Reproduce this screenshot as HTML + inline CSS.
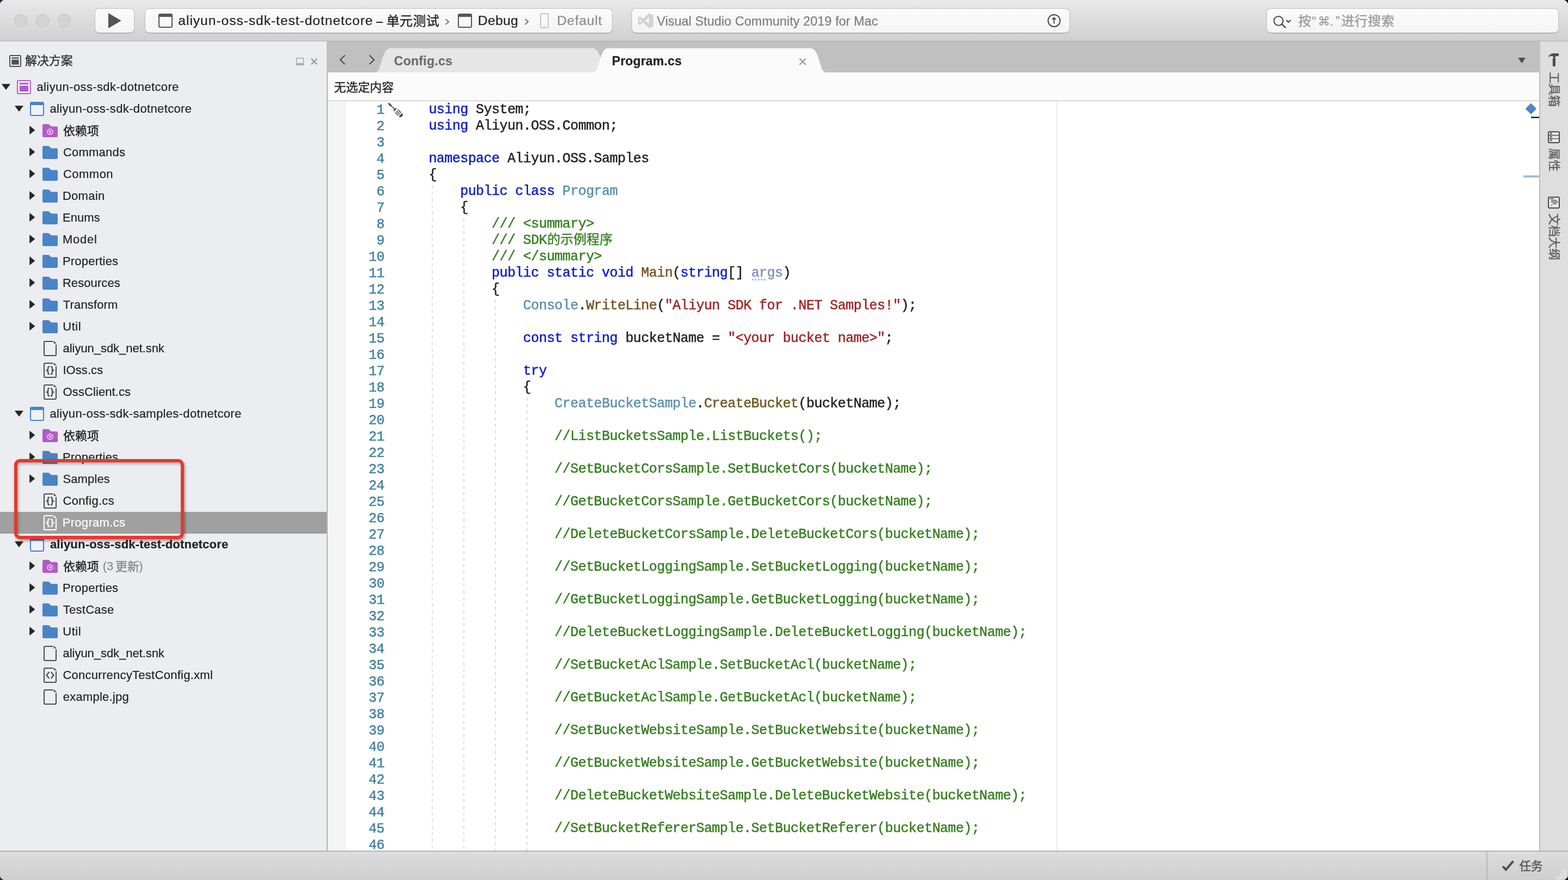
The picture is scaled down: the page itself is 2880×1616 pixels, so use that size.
<!DOCTYPE html><html><head><meta charset="utf-8"><title>VS</title><style>
*{box-sizing:border-box}
html,body{margin:0;padding:0}
body{width:2880px;height:1616px;overflow:hidden;position:relative;background:linear-gradient(to right,#15264c 0,#15264c 50%,#000 50%);font-family:"Liberation Sans",sans-serif}
#win{will-change:transform;position:absolute;left:0;top:0;width:2880px;height:1616px;border-radius:9px;overflow:hidden;background:#fff}
#win span{position:absolute;white-space:pre;-webkit-text-stroke:0.22px currentColor}
.ab{position:absolute;overflow:visible}
#win span.cjt{font-family:"Liberation Sans","Noto Sans CJK SC",sans-serif;-webkit-text-stroke:0.4px currentColor}
.box{position:absolute;top:15px;height:46px;border-radius:8.5px;background:linear-gradient(#fbfbfb,#f4f4f4);border:1px solid #c4c4c4;border-bottom-color:#a6a6a6;border-top-color:#c0c0c0;box-shadow:0 1px 1px rgba(0,0,0,0.10),0 0 0 0.5px rgba(0,0,0,0.05)}
#tb{position:absolute;left:0;top:0;width:2880px;height:76px;background:linear-gradient(#e9e9e9,#d0d0d0);border-bottom:1px solid #adadad}
#side{position:absolute;left:0;top:76px;width:600px;height:1486px;background:#ecedf1}
#sel{position:absolute;left:0;top:940px;width:600px;height:40px;background:#a0a0a0}
#vsep{position:absolute;left:600px;top:133px;width:2px;height:1429px;background:#b4b4b4}
#tabs{position:absolute;left:600px;top:76px;width:2227px;height:57px;background:#c0c0c0}
#crumb{position:absolute;left:602px;top:133px;width:2225px;height:53px;background:#fbfbfb;border-bottom:2px solid #dadada}
#ed{position:absolute;left:602px;top:186px;width:2225px;height:1376px;background:#fff;overflow:hidden}
#gut{position:absolute;left:0;top:0;width:34px;height:1376px;background:#f5f5f5}
#rs{position:absolute;left:2827px;top:76px;width:53px;height:1486px;background:#dedede;border-left:2px solid #bebebe}
#sb{position:absolute;left:0;top:1562px;width:2880px;height:54px;background:linear-gradient(#dddddd,#cecece);border-top:2px solid #b4b4b4}
.cl{color:#222}
.ln,.cl{position:absolute;font-family:"Liberation Mono",monospace;white-space:pre;-webkit-text-stroke:0.5px currentColor}
.ln{color:#4180a0;text-align:right;width:80px}
.k{color:#0a1bd2}.t{color:#5b8fb0}.m{color:#74531f}.s{color:#9e2424}.c{color:#35801f}.p{color:#8090bd}
i{font-style:normal}
.guide{position:absolute;width:2px;background:repeating-linear-gradient(to bottom,transparent 0,transparent 4px,#dedede 4px,#dedede 10px,transparent 10px,transparent 12px)}
</style></head><body><div id="win"><div id="tb"></div><div class="ab" style="left:26px;top:26px;width:24px;height:24px;border-radius:50%;background:#d4d4d4;border:1px solid #bdbdbd"></div><div class="ab" style="left:66px;top:26px;width:24px;height:24px;border-radius:50%;background:#d4d4d4;border:1px solid #bdbdbd"></div><div class="ab" style="left:106px;top:26px;width:24px;height:24px;border-radius:50%;background:#d4d4d4;border:1px solid #bdbdbd"></div><div class="box" style="left:173.5px;width:73px"></div><svg class="ab" style="left:199px;top:24px" width="24" height="28" viewBox="0 0 24 28"><path d="M0 0 L0 28 L23.7 14 Z" fill="#555"/></svg><div class="box" style="left:265.5px;width:859px"></div><svg class="ab" style="left:291px;top:25px" width="26" height="26" viewBox="0 0 26 26"><rect x="1" y="1" width="24" height="24" rx="2" fill="none" stroke="#555" stroke-width="2"/><rect x="1" y="1" width="24" height="5" fill="#555"/></svg><span class="T1" style="left:327.35px;top:22.27px;font-size:24.6px;line-height:32px;color:#222;letter-spacing:0.958px;">aliyun-oss-sdk-test-dotnetcore</span><div class="ab" style="left:691.2px;top:39.6px;width:11.7px;height:2.2px;background:#222"></div><span class="cjt" style="left:709.8px;top:25.2px;font-size:24px;line-height:28.8px;color:#222;letter-spacing:0.3px;">单元测试</span><svg class="ab" style="left:816.5px;top:34px" width="9" height="12" viewBox="0 0 9 12"><path d="M1.5 1 L7 6 L1.5 11" fill="none" stroke="#7a7a7a" stroke-width="2.2"/></svg><svg class="ab" style="left:841px;top:25px" width="26" height="26" viewBox="0 0 26 26"><rect x="1" y="1" width="24" height="24" rx="2" fill="none" stroke="#555" stroke-width="2"/><rect x="1" y="1" width="24" height="5" fill="#555"/></svg><span class="T2" style="left:877.81px;top:22.27px;font-size:24.6px;line-height:32px;color:#222;letter-spacing:0.373px;">Debug</span><svg class="ab" style="left:962.5px;top:34px" width="9" height="12" viewBox="0 0 9 12"><path d="M1.5 1 L7 6 L1.5 11" fill="none" stroke="#7a7a7a" stroke-width="2.2"/></svg><svg class="ab" style="left:992px;top:24px" width="16" height="28" viewBox="0 0 16 28"><rect x="1" y="1" width="14" height="26" rx="2" fill="none" stroke="#c6c6c6" stroke-width="2"/><circle cx="8" cy="23.4" r="1.2" fill="#c6c6c6"/></svg><span class="T3" style="left:1022.97px;top:22.27px;font-size:24.6px;line-height:32px;color:#8c8c8c;letter-spacing:0.766px;">Default</span><div class="box" style="left:1159.5px;width:805px"></div><svg class="ab" style="left:1172px;top:24px" width="28" height="28" viewBox="0 0 28 28"><path fill-rule="evenodd" fill="#d3d3d3" d="M20 0 L28 3.4 V24.6 L20 28 L9.2 17.2 L3 22 L0 20.4 V7.6 L3 6 L9.2 10.8 Z M20 8.6 L13 14 L20 19.4 Z M3 10.4 V17.6 L6.8 14 Z"/></svg><span class="T4" style="left:1206.43px;top:23.92px;font-size:23.3px;line-height:30px;color:#7c7c7c;letter-spacing:0.110px;">Visual Studio Community 2019 for Mac</span><svg class="ab" style="left:1924px;top:26px" width="25" height="25" viewBox="0 0 25 25"><circle cx="12.1" cy="11.9" r="11" fill="none" stroke="#444" stroke-width="2"/><path d="M12 5.2 L16.6 9.8 H12.9 V17.8 H11.1 V9.8 H7.4 Z" fill="#444"/></svg><div class="box" style="left:2325.5px;width:537px"></div><svg class="ab" style="left:2338px;top:28px" width="34" height="25" viewBox="0 0 34 25"><circle cx="10.3" cy="10.3" r="8.4" fill="none" stroke="#444" stroke-width="2"/><path d="M16.2 16.4 L23.6 23.2" stroke="#444" stroke-width="2.4"/><path d="M24.6 9 L28.6 12.6 L32.6 9" fill="none" stroke="#444" stroke-width="2"/></svg><span class="cjt" style="left:2384.5px;top:25.0px;font-size:24px;line-height:28.8px;color:#9b9b9b;">按</span><span class="cjt" style="left:2463.5px;top:25.0px;font-size:24px;line-height:28.8px;color:#9b9b9b;letter-spacing:0.5px;">进行搜索</span><span style="left:2409.50px;top:22.88px;font-size:24px;line-height:31px;color:#9b9b9b;">“</span><span style="left:2420.6px;top:26.3px;font-size:22.5px;line-height:27px;color:#9b9b9b;font-family:'Liberation Sans','DejaVu Sans',sans-serif;">⌘</span><span style="left:2442.50px;top:22.88px;font-size:24px;line-height:31px;color:#9b9b9b;">.</span><span style="left:2453.00px;top:22.88px;font-size:24px;line-height:31px;color:#9b9b9b;">”</span><div id="side"></div><div id="sel"></div><div id="vsep"></div><svg class="ab" style="left:17px;top:101px" width="22" height="22" viewBox="0 0 22 22"><rect x="1" y="1" width="20" height="20" rx="1.5" fill="none" stroke="#505050" stroke-width="2"/><rect x="4.4" y="4.4" width="13.2" height="2.4" fill="#505050"/><rect x="4.4" y="8.6" width="13.2" height="9" fill="#505050"/></svg><span class="cjt" style="left:46px;top:99.4px;font-size:22px;line-height:26.4px;color:#333;letter-spacing:-0.1px;">解决方案</span><svg class="ab" style="left:544px;top:106px" width="14" height="14" viewBox="0 0 14 14"><rect x="0.75" y="0.75" width="12.5" height="12.5" fill="none" stroke="#a9a9a9" stroke-width="1.5"/><rect x="0.75" y="10" width="12.5" height="3.25" fill="#a9a9a9"/></svg><svg class="ab" style="left:571px;top:107px" width="12" height="12" viewBox="0 0 12 12"><path d="M0.8 0.8 L11.2 11.2 M11.2 0.8 L0.8 11.2" stroke="#959595" stroke-width="2.3"/></svg><svg class="ab" style="left:3px;top:154px" width="16" height="11" viewBox="0 0 16 11"><path d="M0.6 0.6 L15.4 0.6 L8 10.6 Z" fill="#262626" stroke="#262626" stroke-width="0.8" stroke-linejoin="round"/></svg><svg class="ab" style="left:31px;top:147px" width="26" height="26" viewBox="0 0 26 26"><rect x="1" y="1" width="24" height="24" rx="2" fill="#f6e8f9" stroke="#b660c4" stroke-width="2"/><rect x="5" y="5" width="16" height="3" fill="#b45ac8"/><rect x="5" y="10.4" width="16" height="10.6" fill="#b45ac8"/></svg><span class="R0" style="left:67.50px;top:144.57px;font-size:22px;line-height:29px;color:#222;letter-spacing:0.373px;">aliyun-oss-sdk-dotnetcore</span><svg class="ab" style="left:27px;top:194px" width="16" height="11" viewBox="0 0 16 11"><path d="M0.6 0.6 L15.4 0.6 L8 10.6 Z" fill="#262626" stroke="#262626" stroke-width="0.8" stroke-linejoin="round"/></svg><svg class="ab" style="left:55px;top:187px" width="26" height="26" viewBox="0 0 26 26"><rect x="1" y="1" width="24" height="24" rx="2" fill="#eef1f8" stroke="#4a82c3" stroke-width="2"/><rect x="1" y="1" width="24" height="5" fill="#4a82c3"/></svg><span class="R1" style="left:91.50px;top:184.57px;font-size:22px;line-height:29px;color:#222;letter-spacing:0.359px;">aliyun-oss-sdk-dotnetcore</span><svg class="ab" style="left:54px;top:231.2px" width="11" height="16" viewBox="0 0 11 16"><path d="M0.6 0.6 L0.6 15.4 L9.9 8 Z" fill="#262626" stroke="#262626" stroke-width="0.8" stroke-linejoin="round"/></svg><svg class="ab" style="left:78px;top:228px" width="28" height="24" viewBox="0 0 28 24"><path d="M2 0 H10.6 Q11.6 0 12.4 0.8 L15.2 3.6 Q16 4.3 17 4.3 H26 Q28 4.3 28 6.3 V22 Q28 24 26 24 H2 Q0 24 0 22 V2 Q0 0 2 0 Z" fill="#b05cc4"/><path d="M14 8.6 L18.7 11.3 V16.7 L14 19.4 L9.3 16.7 V11.3 Z" fill="none" stroke="#f3dff7" stroke-width="1.3" stroke-linejoin="round"/><path d="M11.3 12.4 L14 14 L16.7 12.4 M14 14 V17.2" fill="none" stroke="#f3dff7" stroke-width="1.6"/></svg><span class="cjt" style="left:116.0px;top:228.2px;font-size:22px;line-height:26.4px;color:#222;letter-spacing:-0.1px;">依赖项</span><svg class="ab" style="left:54px;top:271.2px" width="11" height="16" viewBox="0 0 11 16"><path d="M0.6 0.6 L0.6 15.4 L9.9 8 Z" fill="#262626" stroke="#262626" stroke-width="0.8" stroke-linejoin="round"/></svg><svg class="ab" style="left:78px;top:268px" width="28" height="24" viewBox="0 0 28 24"><path d="M2 0 H10.6 Q11.6 0 12.4 0.8 L15.2 3.6 Q16 4.3 17 4.3 H26 Q28 4.3 28 6.3 V22 Q28 24 26 24 H2 Q0 24 0 22 V2 Q0 0 2 0 Z" fill="#4a84c6"/></svg><span class="R3" style="left:115.89px;top:264.57px;font-size:22px;line-height:29px;color:#222;letter-spacing:0.237px;">Commands</span><svg class="ab" style="left:54px;top:311.2px" width="11" height="16" viewBox="0 0 11 16"><path d="M0.6 0.6 L0.6 15.4 L9.9 8 Z" fill="#262626" stroke="#262626" stroke-width="0.8" stroke-linejoin="round"/></svg><svg class="ab" style="left:78px;top:308px" width="28" height="24" viewBox="0 0 28 24"><path d="M2 0 H10.6 Q11.6 0 12.4 0.8 L15.2 3.6 Q16 4.3 17 4.3 H26 Q28 4.3 28 6.3 V22 Q28 24 26 24 H2 Q0 24 0 22 V2 Q0 0 2 0 Z" fill="#4a84c6"/></svg><span class="R4" style="left:115.89px;top:304.57px;font-size:22px;line-height:29px;color:#222;letter-spacing:0.496px;">Common</span><svg class="ab" style="left:54px;top:351.2px" width="11" height="16" viewBox="0 0 11 16"><path d="M0.6 0.6 L0.6 15.4 L9.9 8 Z" fill="#262626" stroke="#262626" stroke-width="0.8" stroke-linejoin="round"/></svg><svg class="ab" style="left:78px;top:348px" width="28" height="24" viewBox="0 0 28 24"><path d="M2 0 H10.6 Q11.6 0 12.4 0.8 L15.2 3.6 Q16 4.3 17 4.3 H26 Q28 4.3 28 6.3 V22 Q28 24 26 24 H2 Q0 24 0 22 V2 Q0 0 2 0 Z" fill="#4a84c6"/></svg><span class="R5" style="left:114.92px;top:344.57px;font-size:22px;line-height:29px;color:#222;letter-spacing:0.282px;">Domain</span><svg class="ab" style="left:54px;top:391.2px" width="11" height="16" viewBox="0 0 11 16"><path d="M0.6 0.6 L0.6 15.4 L9.9 8 Z" fill="#262626" stroke="#262626" stroke-width="0.8" stroke-linejoin="round"/></svg><svg class="ab" style="left:78px;top:388px" width="28" height="24" viewBox="0 0 28 24"><path d="M2 0 H10.6 Q11.6 0 12.4 0.8 L15.2 3.6 Q16 4.3 17 4.3 H26 Q28 4.3 28 6.3 V22 Q28 24 26 24 H2 Q0 24 0 22 V2 Q0 0 2 0 Z" fill="#4a84c6"/></svg><span class="R6" style="left:114.92px;top:384.57px;font-size:22px;line-height:29px;color:#222;letter-spacing:0.086px;">Enums</span><svg class="ab" style="left:54px;top:431.2px" width="11" height="16" viewBox="0 0 11 16"><path d="M0.6 0.6 L0.6 15.4 L9.9 8 Z" fill="#262626" stroke="#262626" stroke-width="0.8" stroke-linejoin="round"/></svg><svg class="ab" style="left:78px;top:428px" width="28" height="24" viewBox="0 0 28 24"><path d="M2 0 H10.6 Q11.6 0 12.4 0.8 L15.2 3.6 Q16 4.3 17 4.3 H26 Q28 4.3 28 6.3 V22 Q28 24 26 24 H2 Q0 24 0 22 V2 Q0 0 2 0 Z" fill="#4a84c6"/></svg><span class="R7" style="left:114.92px;top:424.57px;font-size:22px;line-height:29px;color:#222;letter-spacing:0.769px;">Model</span><svg class="ab" style="left:54px;top:471.2px" width="11" height="16" viewBox="0 0 11 16"><path d="M0.6 0.6 L0.6 15.4 L9.9 8 Z" fill="#262626" stroke="#262626" stroke-width="0.8" stroke-linejoin="round"/></svg><svg class="ab" style="left:78px;top:468px" width="28" height="24" viewBox="0 0 28 24"><path d="M2 0 H10.6 Q11.6 0 12.4 0.8 L15.2 3.6 Q16 4.3 17 4.3 H26 Q28 4.3 28 6.3 V22 Q28 24 26 24 H2 Q0 24 0 22 V2 Q0 0 2 0 Z" fill="#4a84c6"/></svg><span class="R8" style="left:114.92px;top:464.57px;font-size:22px;line-height:29px;color:#222;letter-spacing:0.212px;">Properties</span><svg class="ab" style="left:54px;top:511.2px" width="11" height="16" viewBox="0 0 11 16"><path d="M0.6 0.6 L0.6 15.4 L9.9 8 Z" fill="#262626" stroke="#262626" stroke-width="0.8" stroke-linejoin="round"/></svg><svg class="ab" style="left:78px;top:508px" width="28" height="24" viewBox="0 0 28 24"><path d="M2 0 H10.6 Q11.6 0 12.4 0.8 L15.2 3.6 Q16 4.3 17 4.3 H26 Q28 4.3 28 6.3 V22 Q28 24 26 24 H2 Q0 24 0 22 V2 Q0 0 2 0 Z" fill="#4a84c6"/></svg><span class="R9" style="left:114.92px;top:504.57px;font-size:22px;line-height:29px;color:#222;letter-spacing:0.081px;">Resources</span><svg class="ab" style="left:54px;top:551.2px" width="11" height="16" viewBox="0 0 11 16"><path d="M0.6 0.6 L0.6 15.4 L9.9 8 Z" fill="#262626" stroke="#262626" stroke-width="0.8" stroke-linejoin="round"/></svg><svg class="ab" style="left:78px;top:548px" width="28" height="24" viewBox="0 0 28 24"><path d="M2 0 H10.6 Q11.6 0 12.4 0.8 L15.2 3.6 Q16 4.3 17 4.3 H26 Q28 4.3 28 6.3 V22 Q28 24 26 24 H2 Q0 24 0 22 V2 Q0 0 2 0 Z" fill="#4a84c6"/></svg><span class="R10" style="left:115.86px;top:544.57px;font-size:22px;line-height:29px;color:#222;letter-spacing:0.131px;">Transform</span><svg class="ab" style="left:54px;top:591.2px" width="11" height="16" viewBox="0 0 11 16"><path d="M0.6 0.6 L0.6 15.4 L9.9 8 Z" fill="#262626" stroke="#262626" stroke-width="0.8" stroke-linejoin="round"/></svg><svg class="ab" style="left:78px;top:588px" width="28" height="24" viewBox="0 0 28 24"><path d="M2 0 H10.6 Q11.6 0 12.4 0.8 L15.2 3.6 Q16 4.3 17 4.3 H26 Q28 4.3 28 6.3 V22 Q28 24 26 24 H2 Q0 24 0 22 V2 Q0 0 2 0 Z" fill="#4a84c6"/></svg><span class="R11" style="left:115.23px;top:584.57px;font-size:22px;line-height:29px;color:#222;letter-spacing:0.535px;">Util</span><svg class="ab" style="left:80px;top:626px" width="24" height="28" viewBox="0 0 24 28"><path d="M17.6 1 H3 Q1 1 1 3 V25 Q1 27 3 27 H21 Q23 27 23 25 V6.4" fill="none" stroke="#4a4a4a" stroke-width="2"/><path d="M18.8 0 V4.7 H24 Z" fill="#4a4a4a"/></svg><span class="R12" style="left:115.58px;top:624.57px;font-size:22px;line-height:29px;color:#222;letter-spacing:-0.052px;">aliyun_sdk_net.snk</span><svg class="ab" style="left:80px;top:666px" width="24" height="28" viewBox="0 0 24 28"><path d="M17.6 1 H3 Q1 1 1 3 V25 Q1 27 3 27 H21 Q23 27 23 25 V6.4" fill="none" stroke="#4a4a4a" stroke-width="2"/><path d="M18.8 0 V4.7 H24 Z" fill="#4a4a4a"/><path d="M11 7.2 Q8.2 7.2 8.2 9.6 V12 Q8.2 14.1 5.4 14.1 Q8.2 14.1 8.2 16.2 V18.8 Q8.2 21.2 11 21.2 M13 7.2 Q15.8 7.2 15.8 9.6 V12 Q15.8 14.1 18.6 14.1 Q15.8 14.1 15.8 16.2 V18.8 Q15.8 21.2 13 21.2" fill="none" stroke="#4a4a4a" stroke-width="2.2" stroke-linejoin="round"/></svg><span class="R13" style="left:115.45px;top:664.57px;font-size:22px;line-height:29px;color:#222;letter-spacing:0.067px;">IOss.cs</span><svg class="ab" style="left:80px;top:706px" width="24" height="28" viewBox="0 0 24 28"><path d="M17.6 1 H3 Q1 1 1 3 V25 Q1 27 3 27 H21 Q23 27 23 25 V6.4" fill="none" stroke="#4a4a4a" stroke-width="2"/><path d="M18.8 0 V4.7 H24 Z" fill="#4a4a4a"/><path d="M11 7.2 Q8.2 7.2 8.2 9.6 V12 Q8.2 14.1 5.4 14.1 Q8.2 14.1 8.2 16.2 V18.8 Q8.2 21.2 11 21.2 M13 7.2 Q15.8 7.2 15.8 9.6 V12 Q15.8 14.1 18.6 14.1 Q15.8 14.1 15.8 16.2 V18.8 Q15.8 21.2 13 21.2" fill="none" stroke="#4a4a4a" stroke-width="2.2" stroke-linejoin="round"/></svg><span class="R14" style="left:115.62px;top:704.57px;font-size:22px;line-height:29px;color:#222;letter-spacing:0.083px;">OssClient.cs</span><svg class="ab" style="left:27px;top:754px" width="16" height="11" viewBox="0 0 16 11"><path d="M0.6 0.6 L15.4 0.6 L8 10.6 Z" fill="#262626" stroke="#262626" stroke-width="0.8" stroke-linejoin="round"/></svg><svg class="ab" style="left:55px;top:747px" width="26" height="26" viewBox="0 0 26 26"><rect x="1" y="1" width="24" height="24" rx="2" fill="#eef1f8" stroke="#4a82c3" stroke-width="2"/><rect x="1" y="1" width="24" height="5" fill="#4a82c3"/></svg><span class="R15" style="left:91.50px;top:744.57px;font-size:22px;line-height:29px;color:#222;letter-spacing:0.332px;">aliyun-oss-sdk-samples-dotnetcore</span><svg class="ab" style="left:54px;top:791.2px" width="11" height="16" viewBox="0 0 11 16"><path d="M0.6 0.6 L0.6 15.4 L9.9 8 Z" fill="#262626" stroke="#262626" stroke-width="0.8" stroke-linejoin="round"/></svg><svg class="ab" style="left:78px;top:788px" width="28" height="24" viewBox="0 0 28 24"><path d="M2 0 H10.6 Q11.6 0 12.4 0.8 L15.2 3.6 Q16 4.3 17 4.3 H26 Q28 4.3 28 6.3 V22 Q28 24 26 24 H2 Q0 24 0 22 V2 Q0 0 2 0 Z" fill="#b05cc4"/><path d="M14 8.6 L18.7 11.3 V16.7 L14 19.4 L9.3 16.7 V11.3 Z" fill="none" stroke="#f3dff7" stroke-width="1.3" stroke-linejoin="round"/><path d="M11.3 12.4 L14 14 L16.7 12.4 M14 14 V17.2" fill="none" stroke="#f3dff7" stroke-width="1.6"/></svg><span class="cjt" style="left:116.0px;top:788.2px;font-size:22px;line-height:26.4px;color:#222;letter-spacing:-0.1px;">依赖项</span><svg class="ab" style="left:54px;top:831.2px" width="11" height="16" viewBox="0 0 11 16"><path d="M0.6 0.6 L0.6 15.4 L9.9 8 Z" fill="#262626" stroke="#262626" stroke-width="0.8" stroke-linejoin="round"/></svg><svg class="ab" style="left:78px;top:828px" width="28" height="24" viewBox="0 0 28 24"><path d="M2 0 H10.6 Q11.6 0 12.4 0.8 L15.2 3.6 Q16 4.3 17 4.3 H26 Q28 4.3 28 6.3 V22 Q28 24 26 24 H2 Q0 24 0 22 V2 Q0 0 2 0 Z" fill="#4a84c6"/></svg><span class="R17" style="left:114.92px;top:824.57px;font-size:22px;line-height:29px;color:#222;letter-spacing:0.212px;">Properties</span><svg class="ab" style="left:54px;top:871.2px" width="11" height="16" viewBox="0 0 11 16"><path d="M0.6 0.6 L0.6 15.4 L9.9 8 Z" fill="#262626" stroke="#262626" stroke-width="0.8" stroke-linejoin="round"/></svg><svg class="ab" style="left:78px;top:868px" width="28" height="24" viewBox="0 0 28 24"><path d="M2 0 H10.6 Q11.6 0 12.4 0.8 L15.2 3.6 Q16 4.3 17 4.3 H26 Q28 4.3 28 6.3 V22 Q28 24 26 24 H2 Q0 24 0 22 V2 Q0 0 2 0 Z" fill="#4a84c6"/></svg><span class="R18" style="left:115.48px;top:864.57px;font-size:22px;line-height:29px;color:#222;letter-spacing:0.113px;">Samples</span><svg class="ab" style="left:80px;top:906px" width="24" height="28" viewBox="0 0 24 28"><path d="M17.6 1 H3 Q1 1 1 3 V25 Q1 27 3 27 H21 Q23 27 23 25 V6.4" fill="none" stroke="#4a4a4a" stroke-width="2"/><path d="M18.8 0 V4.7 H24 Z" fill="#4a4a4a"/><path d="M11 7.2 Q8.2 7.2 8.2 9.6 V12 Q8.2 14.1 5.4 14.1 Q8.2 14.1 8.2 16.2 V18.8 Q8.2 21.2 11 21.2 M13 7.2 Q15.8 7.2 15.8 9.6 V12 Q15.8 14.1 18.6 14.1 Q15.8 14.1 15.8 16.2 V18.8 Q15.8 21.2 13 21.2" fill="none" stroke="#4a4a4a" stroke-width="2.2" stroke-linejoin="round"/></svg><span class="R19" style="left:115.46px;top:904.57px;font-size:22px;line-height:29px;color:#222;letter-spacing:0.314px;">Config.cs</span><svg class="ab" style="left:80px;top:946px" width="24" height="28" viewBox="0 0 24 28"><path d="M17.6 1 H3 Q1 1 1 3 V25 Q1 27 3 27 H21 Q23 27 23 25 V6.4" fill="none" stroke="#fff" stroke-width="2"/><path d="M18.8 0 V4.7 H24 Z" fill="#fff"/><path d="M11 7.2 Q8.2 7.2 8.2 9.6 V12 Q8.2 14.1 5.4 14.1 Q8.2 14.1 8.2 16.2 V18.8 Q8.2 21.2 11 21.2 M13 7.2 Q15.8 7.2 15.8 9.6 V12 Q15.8 14.1 18.6 14.1 Q15.8 14.1 15.8 16.2 V18.8 Q15.8 21.2 13 21.2" fill="none" stroke="#fff" stroke-width="2.2" stroke-linejoin="round"/></svg><span class="R20" style="left:114.70px;top:944.57px;font-size:22px;line-height:29px;color:#fff;letter-spacing:0.316px;">Program.cs</span><svg class="ab" style="left:27px;top:994px" width="16" height="11" viewBox="0 0 16 11"><path d="M0.6 0.6 L15.4 0.6 L8 10.6 Z" fill="#262626" stroke="#262626" stroke-width="0.8" stroke-linejoin="round"/></svg><svg class="ab" style="left:55px;top:987px" width="26" height="26" viewBox="0 0 26 26"><rect x="1" y="1" width="24" height="24" rx="2" fill="#eef1f8" stroke="#4a82c3" stroke-width="2"/><rect x="1" y="1" width="24" height="5" fill="#4a82c3"/></svg><span class="R21" style="left:91.88px;top:984.57px;font-size:22px;line-height:29px;color:#222;font-weight:700;letter-spacing:0.201px;">aliyun-oss-sdk-test-dotnetcore</span><svg class="ab" style="left:54px;top:1031.2px" width="11" height="16" viewBox="0 0 11 16"><path d="M0.6 0.6 L0.6 15.4 L9.9 8 Z" fill="#262626" stroke="#262626" stroke-width="0.8" stroke-linejoin="round"/></svg><svg class="ab" style="left:78px;top:1028px" width="28" height="24" viewBox="0 0 28 24"><path d="M2 0 H10.6 Q11.6 0 12.4 0.8 L15.2 3.6 Q16 4.3 17 4.3 H26 Q28 4.3 28 6.3 V22 Q28 24 26 24 H2 Q0 24 0 22 V2 Q0 0 2 0 Z" fill="#b05cc4"/><path d="M14 8.6 L18.7 11.3 V16.7 L14 19.4 L9.3 16.7 V11.3 Z" fill="none" stroke="#f3dff7" stroke-width="1.3" stroke-linejoin="round"/><path d="M11.3 12.4 L14 14 L16.7 12.4 M14 14 V17.2" fill="none" stroke="#f3dff7" stroke-width="1.6"/></svg><span class="cjt" style="left:116.0px;top:1028.2px;font-size:22px;line-height:26.4px;color:#222;letter-spacing:-0.1px;">依赖项</span><span style="left:188.80px;top:1024.57px;font-size:22px;line-height:29px;color:#8a8a8a;">(3</span><span class="cjt" style="left:212.0px;top:1028.2px;font-size:22px;line-height:26.4px;color:#8a8a8a;letter-spacing:-0.1px;">更新</span><span style="left:255.30px;top:1024.57px;font-size:22px;line-height:29px;color:#8a8a8a;">)</span><svg class="ab" style="left:54px;top:1071.2px" width="11" height="16" viewBox="0 0 11 16"><path d="M0.6 0.6 L0.6 15.4 L9.9 8 Z" fill="#262626" stroke="#262626" stroke-width="0.8" stroke-linejoin="round"/></svg><svg class="ab" style="left:78px;top:1068px" width="28" height="24" viewBox="0 0 28 24"><path d="M2 0 H10.6 Q11.6 0 12.4 0.8 L15.2 3.6 Q16 4.3 17 4.3 H26 Q28 4.3 28 6.3 V22 Q28 24 26 24 H2 Q0 24 0 22 V2 Q0 0 2 0 Z" fill="#4a84c6"/></svg><span class="R23" style="left:114.92px;top:1064.57px;font-size:22px;line-height:29px;color:#222;letter-spacing:0.212px;">Properties</span><svg class="ab" style="left:54px;top:1111.2px" width="11" height="16" viewBox="0 0 11 16"><path d="M0.6 0.6 L0.6 15.4 L9.9 8 Z" fill="#262626" stroke="#262626" stroke-width="0.8" stroke-linejoin="round"/></svg><svg class="ab" style="left:78px;top:1108px" width="28" height="24" viewBox="0 0 28 24"><path d="M2 0 H10.6 Q11.6 0 12.4 0.8 L15.2 3.6 Q16 4.3 17 4.3 H26 Q28 4.3 28 6.3 V22 Q28 24 26 24 H2 Q0 24 0 22 V2 Q0 0 2 0 Z" fill="#4a84c6"/></svg><span class="R24" style="left:115.86px;top:1104.57px;font-size:22px;line-height:29px;color:#222;letter-spacing:0.243px;">TestCase</span><svg class="ab" style="left:54px;top:1151.2px" width="11" height="16" viewBox="0 0 11 16"><path d="M0.6 0.6 L0.6 15.4 L9.9 8 Z" fill="#262626" stroke="#262626" stroke-width="0.8" stroke-linejoin="round"/></svg><svg class="ab" style="left:78px;top:1148px" width="28" height="24" viewBox="0 0 28 24"><path d="M2 0 H10.6 Q11.6 0 12.4 0.8 L15.2 3.6 Q16 4.3 17 4.3 H26 Q28 4.3 28 6.3 V22 Q28 24 26 24 H2 Q0 24 0 22 V2 Q0 0 2 0 Z" fill="#4a84c6"/></svg><span class="R25" style="left:115.23px;top:1144.57px;font-size:22px;line-height:29px;color:#222;letter-spacing:0.535px;">Util</span><svg class="ab" style="left:80px;top:1186px" width="24" height="28" viewBox="0 0 24 28"><path d="M17.6 1 H3 Q1 1 1 3 V25 Q1 27 3 27 H21 Q23 27 23 25 V6.4" fill="none" stroke="#4a4a4a" stroke-width="2"/><path d="M18.8 0 V4.7 H24 Z" fill="#4a4a4a"/></svg><span class="R26" style="left:115.58px;top:1184.57px;font-size:22px;line-height:29px;color:#222;letter-spacing:-0.052px;">aliyun_sdk_net.snk</span><svg class="ab" style="left:80px;top:1226px" width="24" height="28" viewBox="0 0 24 28"><path d="M17.6 1 H3 Q1 1 1 3 V25 Q1 27 3 27 H21 Q23 27 23 25 V6.4" fill="none" stroke="#4a4a4a" stroke-width="2"/><path d="M18.8 0 V4.7 H24 Z" fill="#4a4a4a"/><path d="M10.2 8 L5.6 13.9 L10.2 19.9 M13.8 8 L18.4 13.9 L13.8 19.9" fill="none" stroke="#4a4a4a" stroke-width="2.2"/></svg><span class="R27" style="left:115.46px;top:1224.57px;font-size:22px;line-height:29px;color:#222;letter-spacing:0.265px;">ConcurrencyTestConfig.xml</span><svg class="ab" style="left:80px;top:1266px" width="24" height="28" viewBox="0 0 24 28"><path d="M17.6 1 H3 Q1 1 1 3 V25 Q1 27 3 27 H21 Q23 27 23 25 V6.4" fill="none" stroke="#4a4a4a" stroke-width="2"/><path d="M18.8 0 V4.7 H24 Z" fill="#4a4a4a"/></svg><span class="R28" style="left:115.72px;top:1264.57px;font-size:22px;line-height:29px;color:#222;letter-spacing:0.231px;">example.jpg</span><div class="ab" style="left:26px;top:843px;width:312px;height:146.5px;border:6px solid #e8382a;border-radius:11px;box-shadow:2px 3px 5px rgba(0,0,0,0.35), inset 2px 3px 5px rgba(0,0,0,0.28)"></div><div id="tabs"></div><svg class="ab" style="left:0;top:0" width="2880" height="140" viewBox="0 0 2880 140"><path d="M690 133 C694.5 131.5 696.5 127.5 697.8 122.6 L702.5 107 C705.5 99 709 88.4 717.5 88.4 H1088.5 C1097 88.4 1100.5 99 1103.5 107 L1108.2 122.6 C1109.5 127.5 1111.5 131.5 1116 133 Z" fill="#e6e6e6"/><path d="M1090 133 C1094.5 131.5 1096.5 127.5 1097.8 122.6 L1102.5 107 C1105.5 99 1109 88.4 1117.5 88.4 H1488.5 C1497 88.4 1500.5 99 1503.5 107 L1508.2 122.6 C1509.5 127.5 1511.5 131.5 1516 133 Z" fill="#fbfbfb"/><path d="M633.5 101.5 L625 109.7 L633.5 118 M678.5 101.5 L687 109.7 L678.5 118" fill="none" stroke="#4c4c4c" stroke-width="2.2"/><path d="M1468.5 107.3 L1480 118.8 M1480 107.3 L1468.5 118.8" stroke="#8a8a8a" stroke-width="1.9"/><path d="M2788.4 106 H2802 L2795.2 116.6 Z" fill="#4f4f4f"/></svg><span class="TC" style="left:723.82px;top:97.23px;font-size:23px;line-height:30px;color:#6c6c6c;font-weight:700;letter-spacing:0.279px;">Config.cs</span><span class="TP" style="left:1123.90px;top:97.23px;font-size:23px;line-height:30px;color:#222;font-weight:700;letter-spacing:0.164px;">Program.cs</span><div id="crumb"></div><span class="cjt" style="left:613.6px;top:148.4px;font-size:22px;line-height:26.4px;color:#262626;letter-spacing:-0.1px;">无选定内容</span><div id="ed"><div id="gut"></div><div class="guide" style="left:191.0px;top:150px;height:1226px"></div><div class="guide" style="left:249.0px;top:210px;height:1166px"></div><div class="guide" style="left:307.0px;top:360px;height:1016px"></div><div class="guide" style="left:365.0px;top:540px;height:836px"></div><div class="ab" style="left:1338px;top:0;width:2px;height:1376px;background:#ececec"></div><div class="ln" style="left:24.0px;top:2.25px;font-size:25px;line-height:30px;letter-spacing:-0.553px">1</div><div class="cl" style="left:185.4px;top:1.45px;font-size:25px;line-height:30px;letter-spacing:-0.553px"><i class="k">using</i> System;</div><div class="ln" style="left:24.0px;top:32.25px;font-size:25px;line-height:30px;letter-spacing:-0.553px">2</div><div class="cl" style="left:185.4px;top:31.45px;font-size:25px;line-height:30px;letter-spacing:-0.553px"><i class="k">using</i> Aliyun.OSS.Common;</div><div class="ln" style="left:24.0px;top:62.25px;font-size:25px;line-height:30px;letter-spacing:-0.553px">3</div><div class="ln" style="left:24.0px;top:92.25px;font-size:25px;line-height:30px;letter-spacing:-0.553px">4</div><div class="cl" style="left:185.4px;top:91.45px;font-size:25px;line-height:30px;letter-spacing:-0.553px"><i class="k">namespace</i> Aliyun.OSS.Samples</div><div class="ln" style="left:24.0px;top:122.25px;font-size:25px;line-height:30px;letter-spacing:-0.553px">5</div><div class="cl" style="left:185.4px;top:121.45px;font-size:25px;line-height:30px;letter-spacing:-0.553px">{</div><div class="ln" style="left:24.0px;top:152.25px;font-size:25px;line-height:30px;letter-spacing:-0.553px">6</div><div class="cl" style="left:185.4px;top:151.45px;font-size:25px;line-height:30px;letter-spacing:-0.553px">    <i class="k">public class</i> <i class="t">Program</i></div><div class="ln" style="left:24.0px;top:182.25px;font-size:25px;line-height:30px;letter-spacing:-0.553px">7</div><div class="cl" style="left:185.4px;top:181.45px;font-size:25px;line-height:30px;letter-spacing:-0.553px">    {</div><div class="ln" style="left:24.0px;top:212.25px;font-size:25px;line-height:30px;letter-spacing:-0.553px">8</div><div class="cl" style="left:185.4px;top:211.45px;font-size:25px;line-height:30px;letter-spacing:-0.553px">        <i class="c">/// &lt;summary&gt;</i></div><div class="ln" style="left:24.0px;top:242.25px;font-size:25px;line-height:30px;letter-spacing:-0.553px">9</div><span class="cjt" style="left:403.15px;top:240.05px;font-size:24px;line-height:28.8px;color:#35801f;">的示例程序</span><div class="cl" style="left:185.4px;top:241.45px;font-size:25px;line-height:30px;letter-spacing:-0.553px">        <i class="c">/// SDK</i></div><div class="ln" style="left:24.0px;top:272.25px;font-size:25px;line-height:30px;letter-spacing:-0.553px">10</div><div class="cl" style="left:185.4px;top:271.45px;font-size:25px;line-height:30px;letter-spacing:-0.553px">        <i class="c">/// &lt;/summary&gt;</i></div><div class="ln" style="left:24.0px;top:302.25px;font-size:25px;line-height:30px;letter-spacing:-0.553px">11</div><div class="cl" style="left:185.4px;top:301.45px;font-size:25px;line-height:30px;letter-spacing:-0.553px">        <i class="k">public static void</i> <i class="m">Main</i>(<i class="k">string</i>[] <i class="p">args</i>)</div><div class="ln" style="left:24.0px;top:332.25px;font-size:25px;line-height:30px;letter-spacing:-0.553px">12</div><div class="cl" style="left:185.4px;top:331.45px;font-size:25px;line-height:30px;letter-spacing:-0.553px">        {</div><div class="ln" style="left:24.0px;top:362.25px;font-size:25px;line-height:30px;letter-spacing:-0.553px">13</div><div class="cl" style="left:185.4px;top:361.45px;font-size:25px;line-height:30px;letter-spacing:-0.553px">            <i class="t">Console</i>.<i class="m">WriteLine</i>(<i class="s">&quot;Aliyun SDK for .NET Samples!&quot;</i>);</div><div class="ln" style="left:24.0px;top:392.25px;font-size:25px;line-height:30px;letter-spacing:-0.553px">14</div><div class="ln" style="left:24.0px;top:422.25px;font-size:25px;line-height:30px;letter-spacing:-0.553px">15</div><div class="cl" style="left:185.4px;top:421.45px;font-size:25px;line-height:30px;letter-spacing:-0.553px">            <i class="k">const string</i> bucketName = <i class="s">&quot;&lt;your bucket name&gt;&quot;</i>;</div><div class="ln" style="left:24.0px;top:452.25px;font-size:25px;line-height:30px;letter-spacing:-0.553px">16</div><div class="ln" style="left:24.0px;top:482.25px;font-size:25px;line-height:30px;letter-spacing:-0.553px">17</div><div class="cl" style="left:185.4px;top:481.45px;font-size:25px;line-height:30px;letter-spacing:-0.553px">            <i class="k">try</i></div><div class="ln" style="left:24.0px;top:512.25px;font-size:25px;line-height:30px;letter-spacing:-0.553px">18</div><div class="cl" style="left:185.4px;top:511.45px;font-size:25px;line-height:30px;letter-spacing:-0.553px">            {</div><div class="ln" style="left:24.0px;top:542.25px;font-size:25px;line-height:30px;letter-spacing:-0.553px">19</div><div class="cl" style="left:185.4px;top:541.45px;font-size:25px;line-height:30px;letter-spacing:-0.553px">                <i class="t">CreateBucketSample</i>.<i class="m">CreateBucket</i>(bucketName);</div><div class="ln" style="left:24.0px;top:572.25px;font-size:25px;line-height:30px;letter-spacing:-0.553px">20</div><div class="ln" style="left:24.0px;top:602.25px;font-size:25px;line-height:30px;letter-spacing:-0.553px">21</div><div class="cl" style="left:185.4px;top:601.45px;font-size:25px;line-height:30px;letter-spacing:-0.553px">                <i class="c">//ListBucketsSample.ListBuckets();</i></div><div class="ln" style="left:24.0px;top:632.25px;font-size:25px;line-height:30px;letter-spacing:-0.553px">22</div><div class="ln" style="left:24.0px;top:662.25px;font-size:25px;line-height:30px;letter-spacing:-0.553px">23</div><div class="cl" style="left:185.4px;top:661.45px;font-size:25px;line-height:30px;letter-spacing:-0.553px">                <i class="c">//SetBucketCorsSample.SetBucketCors(bucketName);</i></div><div class="ln" style="left:24.0px;top:692.25px;font-size:25px;line-height:30px;letter-spacing:-0.553px">24</div><div class="ln" style="left:24.0px;top:722.25px;font-size:25px;line-height:30px;letter-spacing:-0.553px">25</div><div class="cl" style="left:185.4px;top:721.45px;font-size:25px;line-height:30px;letter-spacing:-0.553px">                <i class="c">//GetBucketCorsSample.GetBucketCors(bucketName);</i></div><div class="ln" style="left:24.0px;top:752.25px;font-size:25px;line-height:30px;letter-spacing:-0.553px">26</div><div class="ln" style="left:24.0px;top:782.25px;font-size:25px;line-height:30px;letter-spacing:-0.553px">27</div><div class="cl" style="left:185.4px;top:781.45px;font-size:25px;line-height:30px;letter-spacing:-0.553px">                <i class="c">//DeleteBucketCorsSample.DeleteBucketCors(bucketName);</i></div><div class="ln" style="left:24.0px;top:812.25px;font-size:25px;line-height:30px;letter-spacing:-0.553px">28</div><div class="ln" style="left:24.0px;top:842.25px;font-size:25px;line-height:30px;letter-spacing:-0.553px">29</div><div class="cl" style="left:185.4px;top:841.45px;font-size:25px;line-height:30px;letter-spacing:-0.553px">                <i class="c">//SetBucketLoggingSample.SetBucketLogging(bucketName);</i></div><div class="ln" style="left:24.0px;top:872.25px;font-size:25px;line-height:30px;letter-spacing:-0.553px">30</div><div class="ln" style="left:24.0px;top:902.25px;font-size:25px;line-height:30px;letter-spacing:-0.553px">31</div><div class="cl" style="left:185.4px;top:901.45px;font-size:25px;line-height:30px;letter-spacing:-0.553px">                <i class="c">//GetBucketLoggingSample.GetBucketLogging(bucketName);</i></div><div class="ln" style="left:24.0px;top:932.25px;font-size:25px;line-height:30px;letter-spacing:-0.553px">32</div><div class="ln" style="left:24.0px;top:962.25px;font-size:25px;line-height:30px;letter-spacing:-0.553px">33</div><div class="cl" style="left:185.4px;top:961.45px;font-size:25px;line-height:30px;letter-spacing:-0.553px">                <i class="c">//DeleteBucketLoggingSample.DeleteBucketLogging(bucketName);</i></div><div class="ln" style="left:24.0px;top:992.25px;font-size:25px;line-height:30px;letter-spacing:-0.553px">34</div><div class="ln" style="left:24.0px;top:1022.25px;font-size:25px;line-height:30px;letter-spacing:-0.553px">35</div><div class="cl" style="left:185.4px;top:1021.45px;font-size:25px;line-height:30px;letter-spacing:-0.553px">                <i class="c">//SetBucketAclSample.SetBucketAcl(bucketName);</i></div><div class="ln" style="left:24.0px;top:1052.25px;font-size:25px;line-height:30px;letter-spacing:-0.553px">36</div><div class="ln" style="left:24.0px;top:1082.25px;font-size:25px;line-height:30px;letter-spacing:-0.553px">37</div><div class="cl" style="left:185.4px;top:1081.45px;font-size:25px;line-height:30px;letter-spacing:-0.553px">                <i class="c">//GetBucketAclSample.GetBucketAcl(bucketName);</i></div><div class="ln" style="left:24.0px;top:1112.25px;font-size:25px;line-height:30px;letter-spacing:-0.553px">38</div><div class="ln" style="left:24.0px;top:1142.25px;font-size:25px;line-height:30px;letter-spacing:-0.553px">39</div><div class="cl" style="left:185.4px;top:1141.45px;font-size:25px;line-height:30px;letter-spacing:-0.553px">                <i class="c">//SetBucketWebsiteSample.SetBucketWebsite(bucketName);</i></div><div class="ln" style="left:24.0px;top:1172.25px;font-size:25px;line-height:30px;letter-spacing:-0.553px">40</div><div class="ln" style="left:24.0px;top:1202.25px;font-size:25px;line-height:30px;letter-spacing:-0.553px">41</div><div class="cl" style="left:185.4px;top:1201.45px;font-size:25px;line-height:30px;letter-spacing:-0.553px">                <i class="c">//GetBucketWebsiteSample.GetBucketWebsite(bucketName);</i></div><div class="ln" style="left:24.0px;top:1232.25px;font-size:25px;line-height:30px;letter-spacing:-0.553px">42</div><div class="ln" style="left:24.0px;top:1262.25px;font-size:25px;line-height:30px;letter-spacing:-0.553px">43</div><div class="cl" style="left:185.4px;top:1261.45px;font-size:25px;line-height:30px;letter-spacing:-0.553px">                <i class="c">//DeleteBucketWebsiteSample.DeleteBucketWebsite(bucketName);</i></div><div class="ln" style="left:24.0px;top:1292.25px;font-size:25px;line-height:30px;letter-spacing:-0.553px">44</div><div class="ln" style="left:24.0px;top:1322.25px;font-size:25px;line-height:30px;letter-spacing:-0.553px">45</div><div class="cl" style="left:185.4px;top:1321.45px;font-size:25px;line-height:30px;letter-spacing:-0.553px">                <i class="c">//SetBucketRefererSample.SetBucketReferer(bucketName);</i></div><div class="ln" style="left:24.0px;top:1352.25px;font-size:25px;line-height:30px;letter-spacing:-0.553px">46</div><div class="ab" style="left:778.5px;top:326px;width:25px;height:0;border-top:3px dotted #a9b9e2"></div><svg class="ab" style="left:0;top:0" width="200" height="40" viewBox="0 0 200 40"><g transform="translate(111.1,3.2) rotate(44)" fill="#4e4e4e"><path d="M0 -0.8 L5.6 -2 L8.6 -0.8 V0.8 L5.6 2 L0 0.8 Z"/><rect x="8.4" y="-0.8" width="7.4" height="1.6"/><path d="M15 -0.8 L18.5 -4.4 V4.4 L15 0.8 Z"/><rect x="21" y="-4.25" width="8.4" height="1.7"/><rect x="21" y="-0.85" width="8.4" height="1.7"/><rect x="21" y="2.55" width="8.4" height="1.7"/><path d="M31 -4.5 A4.5 4.5 0 0 1 31 4.5 Z"/></g></svg><svg class="ab" style="left:2198px;top:0" width="28" height="150" viewBox="0 0 28 150"><path d="M12 3.6 L22.2 13.8 L12 24 L1.8 13.8 Z" fill="#4a86c8"/><rect x="12" y="28.4" width="16" height="2.4" fill="#111"/><rect x="-2" y="136" width="30" height="4" fill="#a3bbe6"/></svg></div><div id="rs"></div><svg class="ab" style="left:2843px;top:97px" width="22" height="26" viewBox="0 0 22 26"><path d="M1 6.9 Q3.6 1.4 10 1 H20 V5.9 H16.3 Q13.6 6.2 13 8 V9.6 H14 V24.8 H8.9 V9.6 H10 V7.2 Q6.6 3.8 1.8 7.8 Z" fill="#4e4e4e"/></svg><span class="cjt" style="left:2866.49px;top:131.6px;font-size:21.5px;line-height:25.8px;color:#5e5e5e;letter-spacing:-0.1px;transform:rotate(90deg);transform-origin:0 0;">工具箱</span><svg class="ab" style="left:2843px;top:241px" width="22" height="22" viewBox="0 0 22 22"><rect x="1" y="1" width="20" height="20" rx="2" fill="#e9e9e9" stroke="#4a4a4a" stroke-width="2"/><path d="M1 7.5 H21 M1 13.6 H21" stroke="#4a4a4a" stroke-width="1.3"/><rect x="4.6" y="3.4" width="2.2" height="2.2" fill="none" stroke="#4a4a4a" stroke-width="1.1"/><rect x="4.6" y="9.5" width="2.2" height="2.2" fill="none" stroke="#4a4a4a" stroke-width="1.1"/><rect x="4.6" y="15.5" width="2.2" height="2.2" fill="none" stroke="#4a4a4a" stroke-width="1.1"/></svg><span class="cjt" style="left:2866.49px;top:272.4px;font-size:21.5px;line-height:25.8px;color:#5e5e5e;letter-spacing:-0.1px;transform:rotate(90deg);transform-origin:0 0;">属性</span><svg class="ab" style="left:2843px;top:361px" width="22" height="22" viewBox="0 0 22 22"><rect x="1" y="1" width="20" height="20" rx="2" fill="#e9e9e9" stroke="#4a4a4a" stroke-width="2"/><path d="M3.2 4 H10.8 M6 7 H16.8 M6 10 H18.8 M9.1 13 H15.9 M6 16 H8" stroke="#4a4a4a" stroke-width="1.7"/></svg><span class="cjt" style="left:2866.49px;top:392px;font-size:21.5px;line-height:25.8px;color:#5e5e5e;letter-spacing:-0.1px;transform:rotate(90deg);transform-origin:0 0;">文档大纲</span><div id="sb"></div><div class="ab" style="left:2730px;top:1564px;width:2px;height:52px;background:#b6b6b6"></div><svg class="ab" style="left:2758px;top:1579px" width="24" height="21" viewBox="0 0 24 21"><path d="M2.2 11.8 L8 18 L21.4 2.4" fill="none" stroke="#505050" stroke-width="4"/></svg><span class="cjt" style="left:2790.5px;top:1578.5px;font-size:21.5px;line-height:25.8px;color:#555;">任务</span><svg class="ab" style="left:0;top:0" width="2880" height="1616" viewBox="0 0 2880 1616"><rect x="2874" y="1596" width="2.4" height="2.4" fill="#f4f4f4"/><rect x="2870" y="1600" width="2.4" height="2.4" fill="#f4f4f4"/><rect x="2874" y="1600" width="2.4" height="2.4" fill="#f4f4f4"/><rect x="2866" y="1604" width="2.4" height="2.4" fill="#f4f4f4"/><rect x="2870" y="1604" width="2.4" height="2.4" fill="#f4f4f4"/><rect x="2874" y="1604" width="2.4" height="2.4" fill="#f4f4f4"/><rect x="2862" y="1608" width="2.4" height="2.4" fill="#f4f4f4"/><rect x="2866" y="1608" width="2.4" height="2.4" fill="#f4f4f4"/><rect x="2870" y="1608" width="2.4" height="2.4" fill="#f4f4f4"/><rect x="2874" y="1608" width="2.4" height="2.4" fill="#f4f4f4"/><rect x="2858" y="1612" width="2.4" height="2.4" fill="#f4f4f4"/><rect x="2862" y="1612" width="2.4" height="2.4" fill="#f4f4f4"/><rect x="2866" y="1612" width="2.4" height="2.4" fill="#f4f4f4"/><rect x="2870" y="1612" width="2.4" height="2.4" fill="#f4f4f4"/></svg></div></body></html>
